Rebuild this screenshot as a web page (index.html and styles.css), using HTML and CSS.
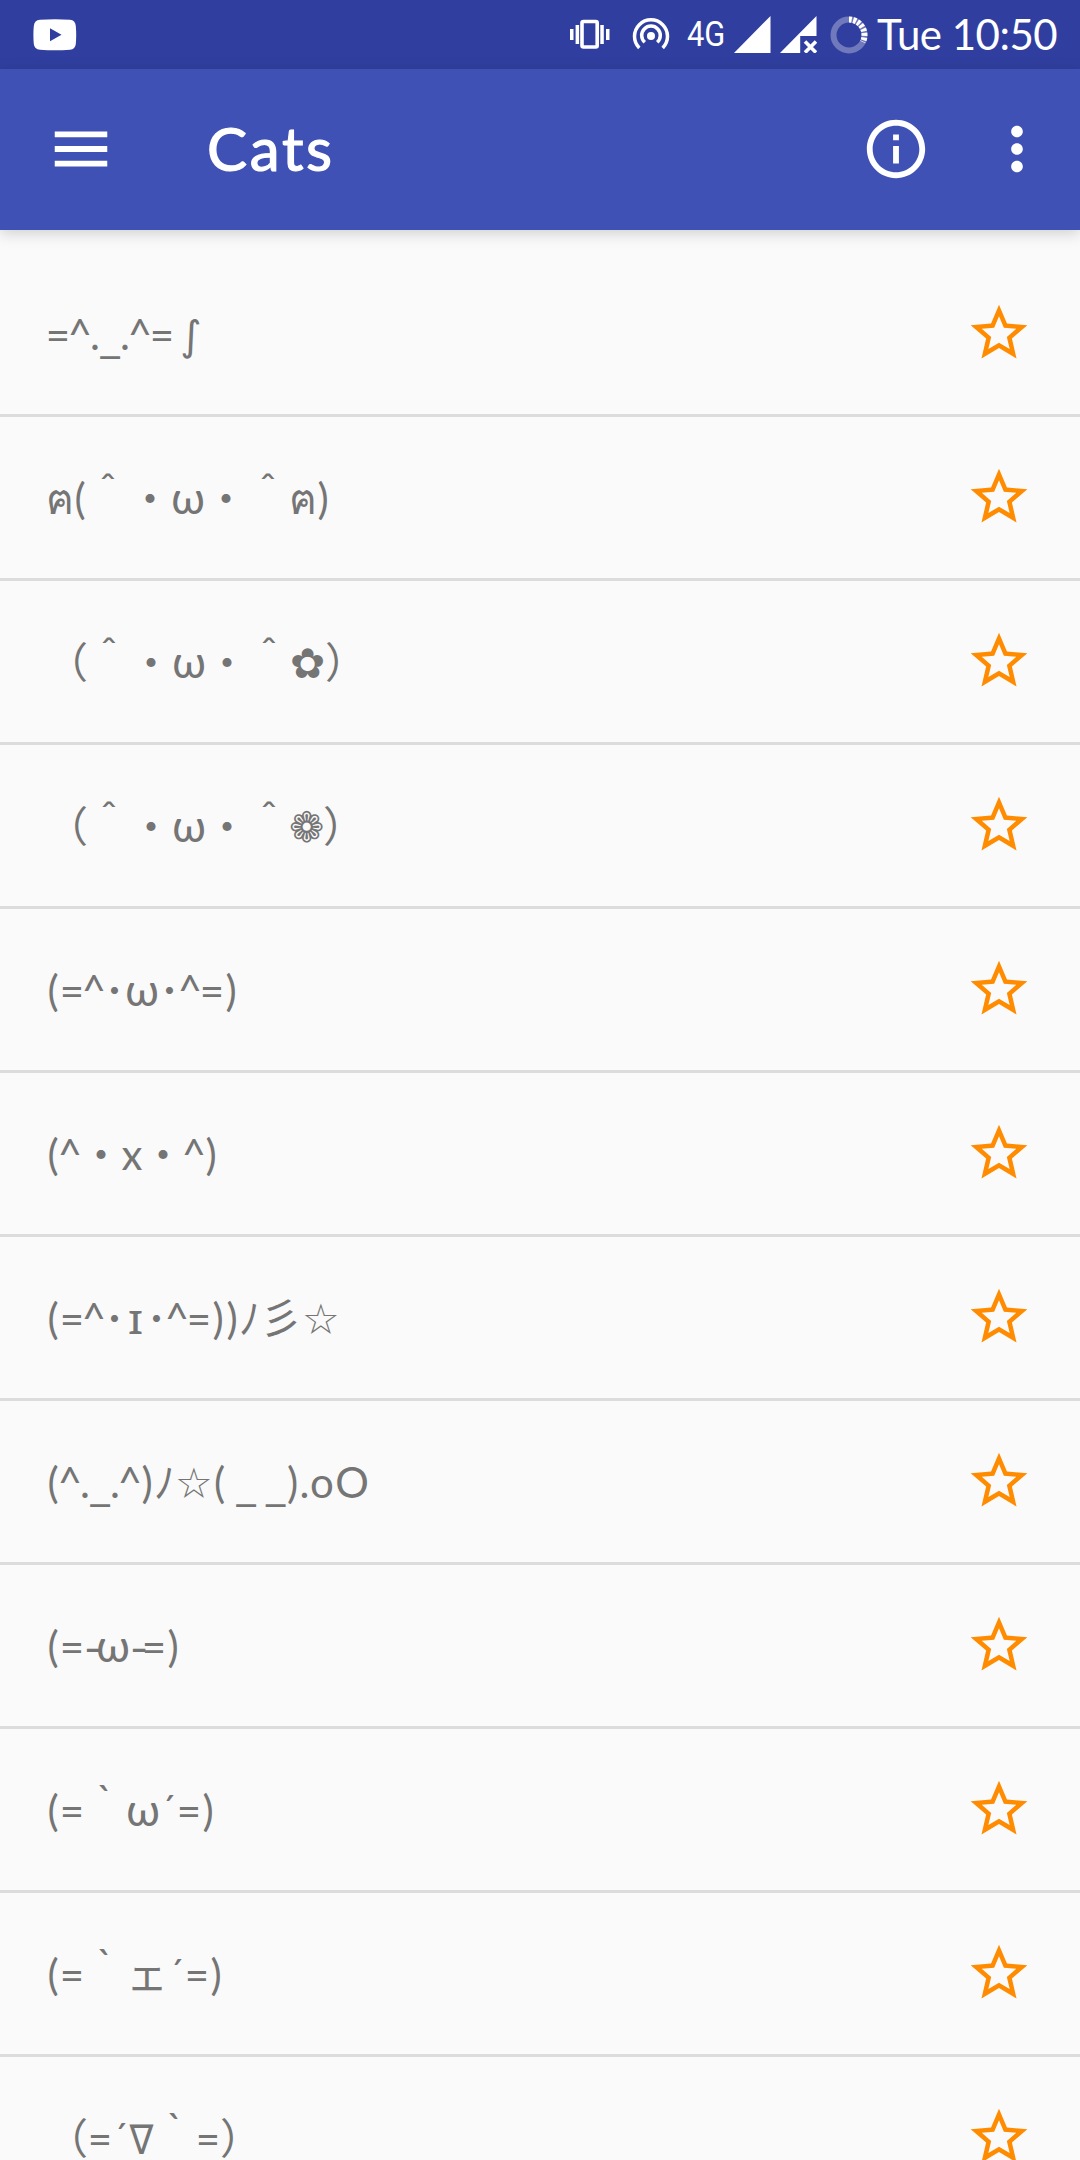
FILE: index.html
```html
<!DOCTYPE html>
<html lang="en">
<head>
<meta charset="utf-8">
<title>Cats</title>
<link rel="stylesheet" href="styles.css">
</head>
<body>
<svg class="defs" width="0" height="0" aria-hidden="true">
  <symbol id="star" viewBox="0 0 24 24"><path d="M22 9.24l-7.19-.62L12 2 9.19 8.63 2 9.24l5.46 4.73L5.82 21 12 17.27 18.18 21l-1.63-7.03L22 9.24zM12 15.4l-3.76 2.27 1-4.28-3.32-2.88 4.38-.38L12 6.1l1.71 4.04 4.38.38-3.32 2.88 1 4.28L12 15.4z"/></symbol>
</svg>
<header class="status">
  <svg class="youtube" width="44" height="32" viewBox="0 0 44 32"><path fill="#fff" d="M7 .8Q22-.4 37 .8 42.300 1.200 42.800 7 43.600 16 42.800 25 42.300 30.300 37 30.700 22 31.700 7 30.700 1.300 30.300.8 25 0 16 .8 7 1.300 1.200 7 .8z"/><path fill="#303f9f" d="M17 9.200v13l11.500-6.500z"/></svg>
  <svg class="vibrate" width="42" height="32" viewBox="0 0 42 32"><rect x="13" y="3.500" width="15.200" height="25.500" rx="1.500" fill="none" stroke="#fff" stroke-width="3.600"/><path fill="#fff" d="M6.600 7h3.500v19H6.600zM1 11h3.500v11H1zM31.300 7h3.500v19h-3.500zM37 11h3.500v11H37z"/></svg>
  <svg class="hotspot" width="38" height="34" viewBox="0 0 38 34"><circle cx="19" cy="19" r="4" fill="#fff"/><path fill="none" stroke="#fff" stroke-width="3.500" d="M7.300 31A16.500 16.500 0 1 1 30.700 31M12.800 25.300A9.300 9.300 0 1 1 25.200 25.300"/></svg>
  <span class="network">4G</span>
  <svg class="signal" width="83" height="37" viewBox="0 0 83 37"><path fill="#fff" d="M0 37L36.500 0v37zM46 37l36.500-37v20H66.200v17z"/><path stroke="#fff" stroke-width="3.600" d="M71 25.500L82 36.500M82 25.500L71 36.500"/></svg>
  <svg class="battery" width="38" height="38" viewBox="0 0 38 38"><circle cx="19" cy="19" r="15.500" fill="none" stroke="#7079bc" stroke-width="6"/><path d="M19 3.500A15.500 15.500 0 0 1 32.800 26" fill="none" stroke="#fff" stroke-width="6" stroke-dasharray="2.900 1.500"/></svg>
  <span class="clock">Tue 10:50</span>
</header>
<nav class="appbar">
  <svg class="menu" width="70" height="70" viewBox="0 0 24 24"><path fill="#fff" d="M3 18h18v-2H3v2zm0-5h18v-2H3v2zm0-7v2h18V6H3z"/></svg>
  <h1 class="title">Cats</h1>
  <svg class="info" width="70" height="70" viewBox="0 0 24 24"><path fill="#fff" d="M11 7h2v2h-2zm0 4h2v6h-2zm1-9C6.480 2 2 6.480 2 12s4.480 10 10 10 10-4.480 10-10S17.520 2 12 2zm0 18c-4.410 0-8-3.590-8-8s3.590-8 8-8 8 3.590 8 8-3.590 8-8 8z"/></svg>
  <svg class="more" width="70" height="70" viewBox="0 0 24 24"><path fill="#fff" d="M12 8c1.100 0 2-.9 2-2s-.9-2-2-2-2 .9-2 2 .9 2 2 2zm0 2c-1.100 0-2 .9-2 2s.9 2 2 2 2-.9 2-2-.9-2-2-2zm0 6c-1.100 0-2 .9-2 2s.9 2 2 2 2-.9 2-2-.9-2-2-2z"/></svg>
</nav>
<ul class="list">
  <li class="row"><p class="face"><i class="eq">=</i><i class="ca">^</i><i class="dt">.</i><i class="us">_</i><i class="dt">.</i><i class="ca">^</i><i class="eq">=</i><i class="sp"> </i><i class="in">∫</i></p><svg class="star"><use href="#star"/></svg></li>
  <li class="row"><p class="face"><i class="th">ฅ</i><i class="pa">(</i><i class="hat">ˆ</i><i class="kd">・</i><i class="om">ω</i><i class="kd">・</i><i class="hat">ˆ</i><i class="th">ฅ</i><i class="pa">)</i></p><svg class="star"><use href="#star"/></svg></li>
  <li class="row"><p class="face"><i class="fw">（</i><i class="hat">ˆ</i><i class="kd">・</i><i class="om">ω</i><i class="kd">・</i><i class="hat">ˆ</i><i class="fl">✿</i><i class="fw">）</i></p><svg class="star"><use href="#star"/></svg></li>
  <li class="row"><p class="face"><i class="fw">（</i><i class="hat">ˆ</i><i class="kd">・</i><i class="om">ω</i><i class="kd">・</i><i class="hat">ˆ</i><i class="fl fl-open">❁</i><i class="fw">）</i></p><svg class="star"><use href="#star"/></svg></li>
  <li class="row"><p class="face"><i class="pa">(</i><i class="eq">=</i><i class="ca">^</i><i class="hd">･</i><i class="om">ω</i><i class="hd">･</i><i class="ca">^</i><i class="eq">=</i><i class="pa">)</i></p><svg class="star"><use href="#star"/></svg></li>
  <li class="row"><p class="face"><i class="pa">(</i><i class="ca">^</i><i class="kd">・</i><i class="ex">x</i><i class="kd">・</i><i class="ca">^</i><i class="pa">)</i></p><svg class="star"><use href="#star"/></svg></li>
  <li class="row"><p class="face"><i class="pa">(</i><i class="eq">=</i><i class="ca">^</i><i class="hd">･</i><i class="si">ɪ</i><i class="hd">･</i><i class="ca">^</i><i class="eq">=</i><i class="pa">)</i><i class="pa">)</i><i class="no">ﾉ</i><i class="fw">彡</i><i class="st">☆</i></p><svg class="star"><use href="#star"/></svg></li>
  <li class="row"><p class="face"><i class="pa">(</i><i class="ca">^</i><i class="dt">.</i><i class="us">_</i><i class="dt">.</i><i class="ca">^</i><i class="pa">)</i><i class="no">ﾉ</i><i class="st">☆</i><i class="pa">(</i><i class="sp"> </i><i class="us">_</i><i class="sp"> </i><i class="us">_</i><i class="pa">)</i><i class="dt">.</i><i class="lo">o</i><i class="uo">O</i></p><svg class="star"><use href="#star"/></svg></li>
  <li class="row"><p class="face"><i class="pa">(</i><i class="eq">=</i><i class="hy">-</i><i class="om">ω</i><i class="hy">-</i><i class="eq">=</i><i class="pa">)</i></p><svg class="star"><use href="#star"/></svg></li>
  <li class="row"><p class="face"><i class="pa">(</i><i class="eq">=</i><i class="gr">`</i><i class="om">ω</i><i class="ac">´</i><i class="eq">=</i><i class="pa">)</i></p><svg class="star"><use href="#star"/></svg></li>
  <li class="row"><p class="face"><i class="pa">(</i><i class="eq">=</i><i class="gr">`</i><i class="fw">ェ</i><i class="ac">´</i><i class="eq">=</i><i class="pa">)</i></p><svg class="star"><use href="#star"/></svg></li>
  <li class="row"><p class="face"><i class="fw">（</i><i class="eq">=</i><i class="ac">´</i><i class="na">∇</i><i class="gr">`</i><i class="eq">=</i><i class="fw">）</i></p><svg class="star"><use href="#star"/></svg></li>
</ul>
</body>
</html>
```
FILE: styles.css
```css
* { box-sizing: border-box; margin: 0; padding: 0; }
html, body { width: 1080px; height: 2160px; overflow: hidden; }
body { background: #fafafa; font-family: Lato, "Noto Sans CJK JP", sans-serif; display: flex; flex-direction: column; }
.defs { position: absolute; }
svg { flex: none; display: block; }

.status { height: 69px; flex: none; background: #303f9f; color: #fff; display: flex; align-items: flex-start; padding-left: 33px; }
.youtube { margin-top: 19px; }
.vibrate { margin: 18px 0 0 492px; }
.hotspot { margin: 17px 0 0 21px; }
.network { margin-left: 17px; width: 46.500px; font: 35px/69px Roboto, sans-serif; white-space: nowrap; transform: scaleX(.88); transform-origin: left; }
.signal { margin-top: 15.500px; }
.battery { margin: 15.500px 0 0 13.500px; }
.clock { margin-left: 9px; font-size: 42px; line-height: 68px; letter-spacing: -.5px; white-space: nowrap; }

.appbar { height: 161px; flex: none; background: #3f51b5; color: #fff; display: flex; align-items: center; padding: 0 0 1px 45.500px; box-shadow: 0 3px 14px rgba(0, 0, 0, .18); }
.title { width: 652px; margin: -2px 0 0 91.500px; font-size: 60px; font-weight: 400; letter-spacing: 2.700px; line-height: 80px; -webkit-text-stroke: 1.200px #fff; }
.info { margin-left: 1.500px; }
.more { margin-left: 51px; }

.list { list-style: none; padding-top: 23px; }
.row { height: 164px; border-bottom: 3px solid #dcdcdc; display: flex; align-items: flex-start; justify-content: space-between; padding: 46px 47px 0 46px; }
.star { width: 68px; height: 68px; fill: #ff8c00; }

.face { color: #757575; font-size: 42px; line-height: 70px; height: 70px; white-space: pre; display: flex; align-items: baseline; }
.face::before { content: "\200b"; width: 0; }
.face i { font-style: normal; line-height: 1; flex: none; display: flex; justify-content: center; }
.eq { width: 24px; }
.ca { width: 20px; }
.dt { width: 10px; }
.us { width: 20px; font-family: "Open Sans", sans-serif; font-size: 45px; transform: translateY(1.500px); }
.sp { width: 9.500px; }
.in { width: 15px; font-family: "DejaVu Sans", sans-serif; font-size: 41px; }
.pa { width: 14px; }
.th { width: 27px; }
.hat { width: 42px; transform: translateY(-10px); }
.kd, .fw { width: 42px; font-family: "Noto Sans CJK JP", sans-serif; }
.om { width: 34px; font-size: 44px; }
.fl { width: 35px; font-family: "DejaVu Sans", sans-serif; }
.fl-open { width: 33px; }
.hd { width: 21px; font-family: "Noto Sans CJK JP", sans-serif; }
.ex { width: 20px; }
.si { width: 21px; font-family: "Noto Sans", sans-serif; transform: scaleX(1.15); }
.no { width: 21px; font-family: "Noto Sans CJK JP", sans-serif; }
.st { width: 37.500px; font-family: "DejaVu Sans", sans-serif; }
.lo { width: 25px; }
.uo { width: 35px; }
.hy { width: 12px; transform: translate(3px, 1px) scaleX(1.2); }
.gr { width: 42px; transform: translateY(-10px); }
.ac { width: 17px; transform: scale(.85, .95); }
.na { width: 25px; font-family: "DejaVu Sans", sans-serif; font-size: 41px; transform: scaleX(.87); }
```
